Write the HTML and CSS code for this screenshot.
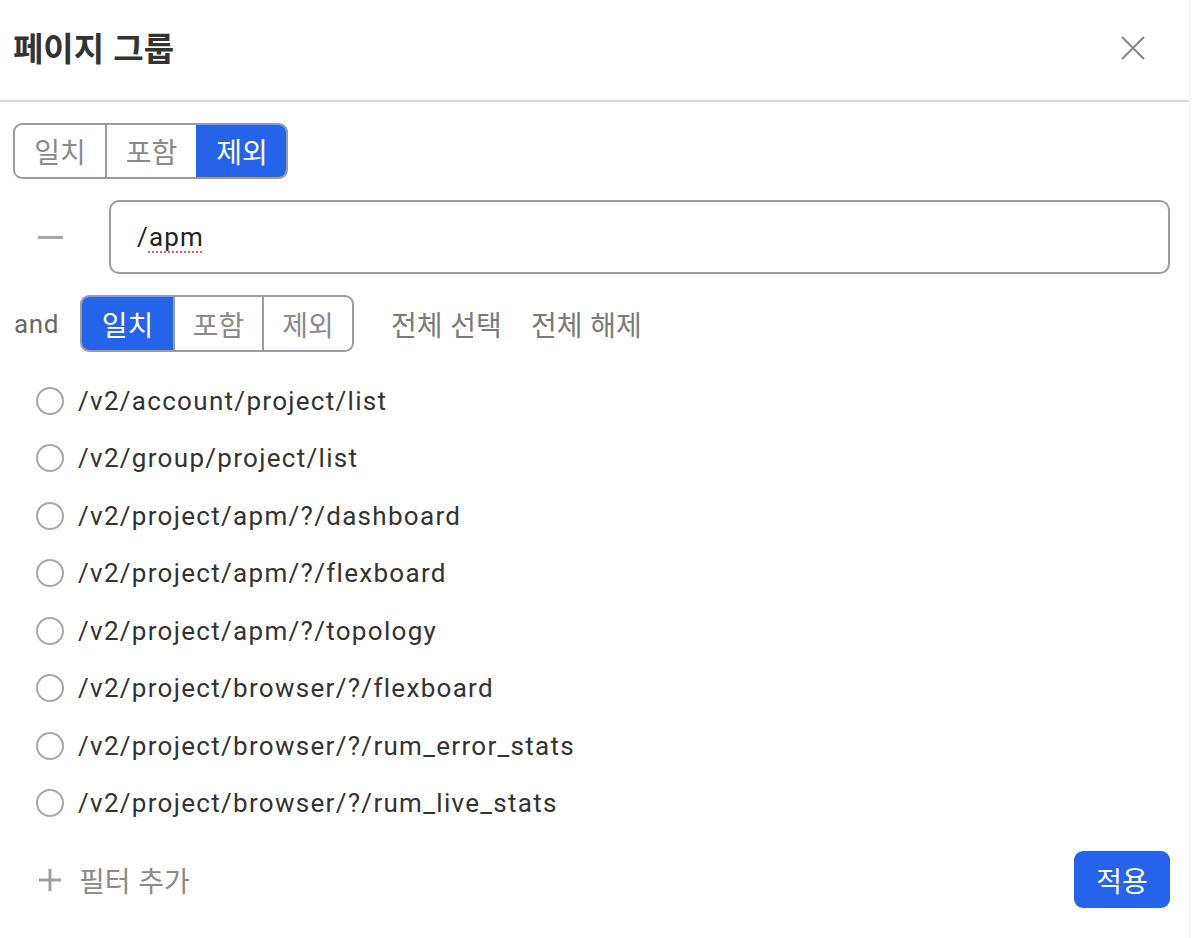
FILE: index.html
```html
<!DOCTYPE html>
<html lang="ko">
<head>
<meta charset="utf-8">
<link rel="stylesheet" href="styles.css">
</head>
<body>
<div class="panel">
  <div class="header">
    <h1 class="title">페이지 그룹</h1>
    <button class="close" aria-label="닫기">
      <svg width="24" height="24" viewBox="0 0 24 24"><path d="M1 1L23 23M23 1L1 23" stroke="#8a8a8a" stroke-width="2.2" fill="none"/></svg>
    </button>
  </div>
  <div class="body">
    <div class="seg seg-first">
      <span class="seg-btn">일치</span>
      <span class="seg-btn">포함</span>
      <span class="seg-btn active">제외</span>
    </div>
    <div class="filter-row">
      <span class="minus"></span>
      <div class="input"><span class="input-text">/<span class="spell">apm</span></span></div>
    </div>
    <div class="and-row">
      <span class="and">and</span>
      <div class="seg seg-second">
        <span class="seg-btn active">일치</span>
        <span class="seg-btn">포함</span>
        <span class="seg-btn">제외</span>
      </div>
      <span class="link link-first">전체 선택</span>
      <span class="link">전체 해제</span>
    </div>
    <ul class="list">
      <li class="item"><span class="radio"></span>/v2/account/project/list</li>
      <li class="item"><span class="radio"></span>/v2/group/project/list</li>
      <li class="item"><span class="radio"></span>/v2/project/apm/?/dashboard</li>
      <li class="item"><span class="radio"></span>/v2/project/apm/?/flexboard</li>
      <li class="item"><span class="radio"></span>/v2/project/apm/?/topology</li>
      <li class="item"><span class="radio"></span>/v2/project/browser/?/flexboard</li>
      <li class="item"><span class="radio"></span>/v2/project/browser/?/rum_error_stats</li>
      <li class="item"><span class="radio"></span>/v2/project/browser/?/rum_live_stats</li>
    </ul>
    <div class="footer">
      <span class="add">
        <svg width="26" height="26" viewBox="0 0 26 26"><path d="M13 2V24M2 13H24" stroke="#a0a0a0" stroke-width="3" fill="none"/></svg>
        <span class="add-text">필터 추가</span>
      </span>
      <button class="apply">적용</button>
    </div>
  </div>
</div>
</body>
</html>
```

FILE: styles.css
```css
html, body {
  margin: 0;
  padding: 0;
  background: #ffffff;
}
body {
  font-family: Roboto, "Noto Sans CJK KR", "Noto Sans", sans-serif;
  color: #333333;
}
.panel {
  width: 1190px;
  height: 938px;
  border-right: 1px solid #f0f0f0;
  box-sizing: border-box;
}
.header {
  height: 100px;
  border-bottom: 2px solid #d6d6d6;
  display: flex;
  align-items: center;
  justify-content: space-between;
  padding: 0 44px 0 13px;
}
.title {
  margin: 0;
  font-size: 33px;
  font-weight: 700;
  color: #333333;
  font-family: "Noto Sans CJK KR", sans-serif;
  margin-top: -6px;
}
.close {
  border: none;
  background: none;
  padding: 0;
  display: flex;
  margin-top: -4px;
}
.body {
  padding: 21px 19px 0 13px;
}
.seg {
  display: inline-flex;
  height: 56px;
  border: 2px solid #9c9c9c;
  border-radius: 9px;
  overflow: hidden;
  box-sizing: border-box;
}
.seg-btn {
  display: flex;
  align-items: center;
  justify-content: center;
  font-size: 28px;
  color: #8a8a8a;
  font-family: "Noto Sans CJK KR", sans-serif;
  border-left: 2px solid #9c9c9c;
}
.seg-btn:first-child {
  border-left: none;
}
.seg-btn.active {
  background: #2563eb;
  color: #ffffff;
  border-left-color: #2563eb;
}
.seg-first .seg-btn:nth-child(1) { width: 90px; }
.seg-first .seg-btn:nth-child(2) { width: 89px; }
.seg-first .seg-btn:nth-child(3) { width: 88px; }
.seg-second .seg-btn:nth-child(1) { width: 91px; }
.seg-second .seg-btn:nth-child(2) { width: 87px; }
.seg-second .seg-btn:nth-child(3) { width: 88px; }
.filter-row {
  display: flex;
  align-items: center;
  margin-top: 21px;
}
.minus {
  width: 25px;
  height: 3px;
  background: #a8a8a8;
  margin-left: 25px;
  margin-right: 46px;
}
.input {
  flex: 1;
  height: 74px;
  border: 2px solid #9c9c9c;
  border-radius: 10px;
  box-sizing: border-box;
  display: flex;
  align-items: center;
  padding-left: 26px;
}
.input-text {
  font-size: 26px;
  letter-spacing: 1.2px;
  color: #222222;
}
.spell {
  text-decoration: underline dotted #e06060;
  text-underline-offset: 5px;
  text-decoration-thickness: 2px;
}
.and-row {
  display: flex;
  align-items: center;
  margin-top: 21px;
}
.and {
  font-size: 26px;
  letter-spacing: 0.6px;
  color: #6a6a6a;
  margin-left: 1px;
  width: 66px;
}
.and-row .seg {
  height: 57px;
}
.link {
  font-size: 28px;
  color: #7a7a7a;
  font-family: "Noto Sans CJK KR", sans-serif;
  margin-left: 29px;
}
.link-first {
  margin-left: 37px;
}
.list {
  list-style: none;
  margin: 20px 0 0 0;
  padding: 0;
}
.item {
  height: 57.5px;
  display: flex;
  align-items: center;
  font-size: 26px;
  letter-spacing: 1.3px;
  color: #333333;
}
.radio {
  width: 28px;
  height: 28px;
  border: 2px solid #a8a8a8;
  border-radius: 50%;
  box-sizing: border-box;
  margin-left: 23px;
  margin-right: 14px;
  flex: none;
}
.footer {
  display: flex;
  align-items: center;
  justify-content: space-between;
  margin-top: 19px;
}
.add {
  display: flex;
  align-items: center;
  margin-left: 24px;
  color: #8a8a8a;
  font-size: 28px;
  font-family: "Noto Sans CJK KR", sans-serif;
}
.add-text {
  margin-left: 16px;
}
.apply {
  width: 96px;
  height: 57px;
  border: none;
  border-radius: 9px;
  background: #2563eb;
  color: #ffffff;
  font-size: 28px;
  font-family: "Noto Sans CJK KR", sans-serif;
  padding: 0;
}
```
